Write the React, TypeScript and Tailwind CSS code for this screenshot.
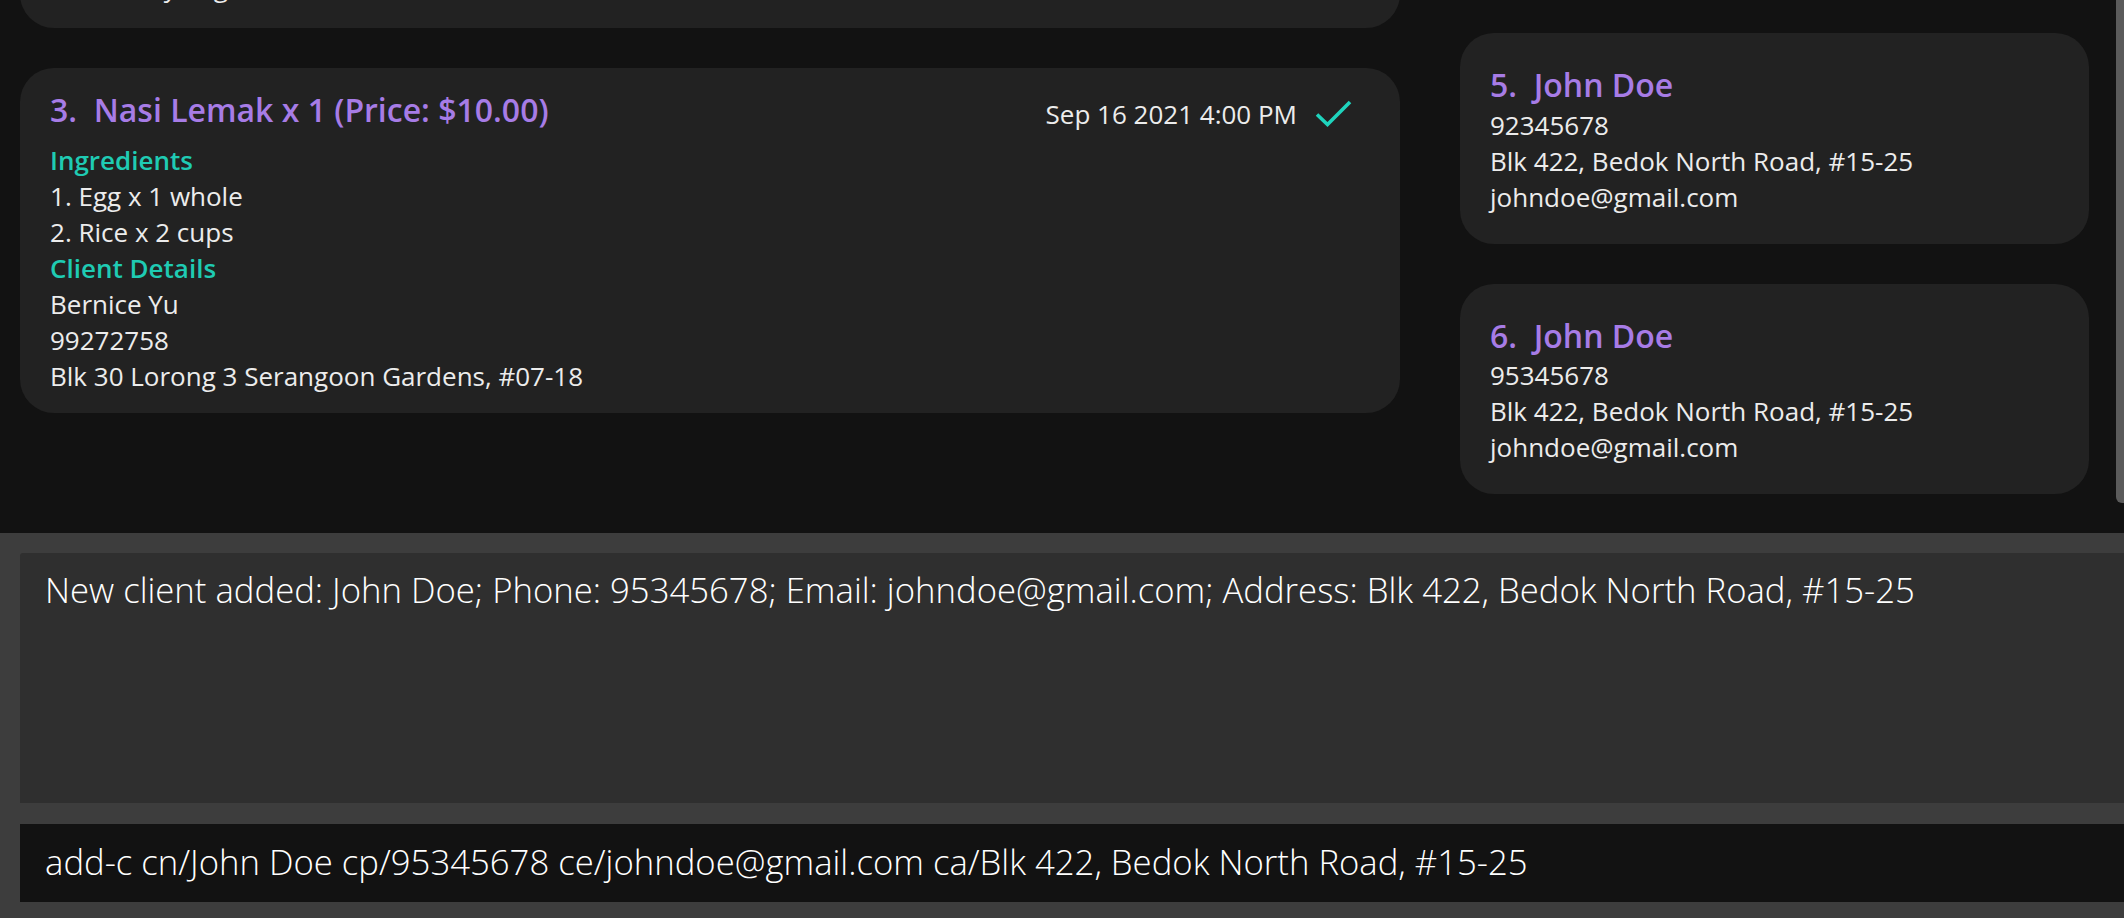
import React from "react";

interface Order {
  index: number;
  name: string;
  qty: number;
  price: string;
  date: string;
  done: boolean;
  ingredients: string[];
  client: { name: string; phone: string; address: string };
}

interface Client {
  index: number;
  name: string;
  phone: string;
  address: string;
  email: string;
}

const orders: Order[] = [
  {
    index: 2,
    name: "Chicken Rice",
    qty: 2,
    price: "$8.00",
    date: "Sep 15 2021 12:00 PM",
    done: false,
    ingredients: ["Chicken x 1 whole", "Rice x 2 cups"],
    client: { name: "Alex Yeoh", phone: "87438807", address: "Blk 30 Geylang Street 29, #06-40" },
  },
  {
    index: 3,
    name: "Nasi Lemak",
    qty: 1,
    price: "$10.00",
    date: "Sep 16 2021 4:00 PM",
    done: true,
    ingredients: ["Egg x 1 whole", "Rice x 2 cups"],
    client: { name: "Bernice Yu", phone: "99272758", address: "Blk 30 Lorong 3 Serangoon Gardens, #07-18" },
  },
];

const clients: Client[] = [
  { index: 5, name: "John Doe", phone: "92345678", address: "Blk 422, Bedok North Road, #15-25", email: "johndoe@gmail.com" },
  { index: 6, name: "John Doe", phone: "95345678", address: "Blk 422, Bedok North Road, #15-25", email: "johndoe@gmail.com" },
];

function Check() {
  return (
    <svg width="40" height="30" viewBox="0 0 40 30" className="shrink-0">
      <polyline points="3,15.5 13.5,25.5 36,3" fill="none" stroke="#1fd4bd" strokeWidth="3.6" />
    </svg>
  );
}

function OrderCard({ order, tall }: { order: Order; tall?: boolean }) {
  return (
    <div
      className={`shrink-0 rounded-[34px] bg-[#222222] pl-[30px] pr-[46px] pt-[20px] ${
        tall ? "pb-[23px]" : "pb-[19px]"
      }`}
    >
      <div className="flex items-start justify-between">
        <div className="text-[32px] font-semibold text-[#a77ce6] leading-[43.6px]">
          {order.index}.&nbsp; {order.name} x {order.qty} (Price: {order.price})
        </div>
        <div className="mt-[8px] flex items-center gap-[17px]">
          <span className="text-[26px] leading-[36px] text-[#ececec]">{order.date}</span>
          {order.done && <Check />}
        </div>
      </div>
      <div className="mt-[10px] text-[26px] leading-[36px] text-[#ececec]">
        <div className="font-semibold text-[#1fcbb3]">Ingredients</div>
        {order.ingredients.map((ing, i) => (
          <div key={i}>
            {i + 1}. {ing}
          </div>
        ))}
        <div className="font-semibold text-[#1fcbb3]">Client Details</div>
        <div>{order.client.name}</div>
        <div>{order.client.phone}</div>
        <div>{order.client.address}</div>
      </div>
    </div>
  );
}

function ClientCard({ client }: { client: Client }) {
  return (
    <div className="shrink-0 rounded-[34px] bg-[#222222] px-[30px] pt-[30px] pb-[29px]">
      <div className="text-[32px] font-semibold text-[#a77ce6] leading-[43.6px]">
        {client.index}.&nbsp; {client.name}
      </div>
      <div className="text-[26px] leading-[36px] text-[#ececec]">
        <div>{client.phone}</div>
        <div>{client.address}</div>
        <div>{client.email}</div>
      </div>
    </div>
  );
}

export default function App() {
  return (
    <div
      className="flex h-[918px] w-[2124px] flex-col overflow-hidden bg-[#3d3d3d]"
      style={{ fontFamily: '"Open Sans", "Noto Sans", sans-serif' }}
    >
      {/* lists */}
      <div className="flex h-[533px] shrink-0 bg-[#121212]">
        <div className="w-[1400px] shrink-0 overflow-hidden pl-[20px]">
          <div className="-mt-[321px] flex flex-col gap-[40px]">
            {orders.map((o, i) => (
              <OrderCard key={o.index} order={o} tall={i === 0} />
            ))}
          </div>
        </div>
        <div className="ml-[60px] flex w-[629px] shrink-0 flex-col gap-[40px] overflow-hidden pt-[33px]">
          {clients.map((c) => (
            <ClientCard key={c.index} client={c} />
          ))}
        </div>
        <div className="flex-1" />
        <div className="w-[8px] shrink-0">
          <div className="h-[503px] rounded-bl-[6px] bg-[#5b5b5b]" />
        </div>
      </div>

      {/* result display */}
      <div className="mt-[20px] ml-[20px] h-[250px] shrink-0 rounded-tl-[3px] bg-[#2f2f2f] pl-[25px] pt-[13px]">
        <div className="text-[34.7px] font-light leading-[47px] text-white">
          New client added: John Doe; Phone: 95345678; Email: johndoe@gmail.com; Address: Blk 422, Bedok North Road, #15-25
        </div>
      </div>

      {/* command box */}
      <div className="mt-[21px] ml-[20px] h-[78px] shrink-0 bg-[#121212] pl-[25px] pt-[14px]">
        <div className="text-[34.7px] font-light leading-[47px] text-white">
          add-c cn/John Doe cp/95345678 ce/johndoe@gmail.com ca/Blk 422, Bedok North Road, #15-25
        </div>
      </div>
    </div>
  );
}
